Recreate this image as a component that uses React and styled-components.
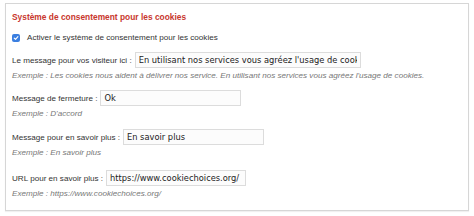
import React from "react";
import styled, { createGlobalStyle } from "styled-components";

const Global = createGlobalStyle`
  html, body { margin: 0; padding: 0; background: #fff; }
  body { font-family: "Liberation Sans", Arial, sans-serif; }
`;

const Page = styled.div`
  padding: 3px 5px 5px 5px;
  width: 474px;
  height: 216px;
  box-sizing: border-box;
`;

const Panel = styled.section`
  border: 1px solid #d6d6d6;
  box-shadow: 0 1px 1px rgba(0,0,0,0.06);
  height: 208px;
  box-sizing: border-box;
  padding: 8px 6px 0 6px;
  display: flex;
  flex-direction: column;
`;

const Title = styled.h3`
  margin: 0;
  font-size: 8.4px;
  font-weight: bold;
  color: #c8372d;
  line-height: 10px;
`;

const CheckRow = styled.label`
  display: flex;
  align-items: center;
  gap: 7px;
  margin-top: 11px;
  font-size: 8.1px;
  color: #333;
  line-height: 10px;
`;

const Box = styled.span`
  width: 8px;
  height: 8px;
  border-radius: 2px;
  background: #3b7fe0;
  display: inline-flex;
  align-items: center;
  justify-content: center;
`;

const Field = styled.div`
  display: flex;
  flex-direction: column;
  margin-top: ${p => p.$top}px;
`;

const Row = styled.div`
  display: flex;
  align-items: center;
  gap: 3px;
  height: 16px;
`;

const Label = styled.span`
  font-size: 8.1px;
  color: #333;
  white-space: nowrap;
`;

const Input = styled.input`
  width: ${p => p.$w}px;
  height: 16px;
  box-sizing: border-box;
  border: 1px solid #dcdcdc;
  border-radius: 0;
  background: #fcfcfc;
  font-family: "DejaVu Sans", sans-serif;
  font-size: 8.3px;
  color: #222;
  padding: 0 3px;
  margin: 0;
  outline: none;
`;

const Example = styled.div`
  font-size: 8.1px;
  font-style: italic;
  color: #777;
  margin-top: 3px;
  line-height: 10px;
  white-space: nowrap;
`;

const fields = [
  { label: "Le message pour vos visiteur ici :", value: "En utilisant nos services vous agréez l'usage de cookies.", w: 226, ex: "Exemple : Les cookies nous aident à délivrer nos service. En utilisant nos services vous agréez l'usage de cookies.", top: 9 },
  { label: "Message de fermeture :", value: "Ok", w: 141, ex: "Exemple : D'accord", top: 9 },
  { label: "Message pour en savoir plus :", value: "En savoir plus", w: 141, ex: "Exemple : En savoir plus", top: 10 },
  { label: "URL pour en savoir plus :", value: "https://www.cookiechoices.org/", w: 140, ex: "Exemple : https://www.cookiechoices.org/", top: 12 },
];

export default function App() {
  return (
    <Page>
      <Global />
      <Panel>
        <Title>Système de consentement pour les cookies</Title>
        <CheckRow>
          <Box>
            <svg width="6" height="6" viewBox="0 0 10 10">
              <path d="M2 5.2 L4.2 7.4 L8.2 2.6" fill="none" stroke="#fff" strokeWidth="1.8" strokeLinecap="round" strokeLinejoin="round" />
            </svg>
          </Box>
          Activer le système de consentement pour les cookies
        </CheckRow>
        {fields.map((f, i) => (
          <Field key={i} $top={f.top}>
            <Row>
              <Label>{f.label}</Label>
              <Input $w={f.w} defaultValue={f.value} readOnly />
            </Row>
            <Example>{f.ex}</Example>
          </Field>
        ))}
      </Panel>
    </Page>
  );
}
